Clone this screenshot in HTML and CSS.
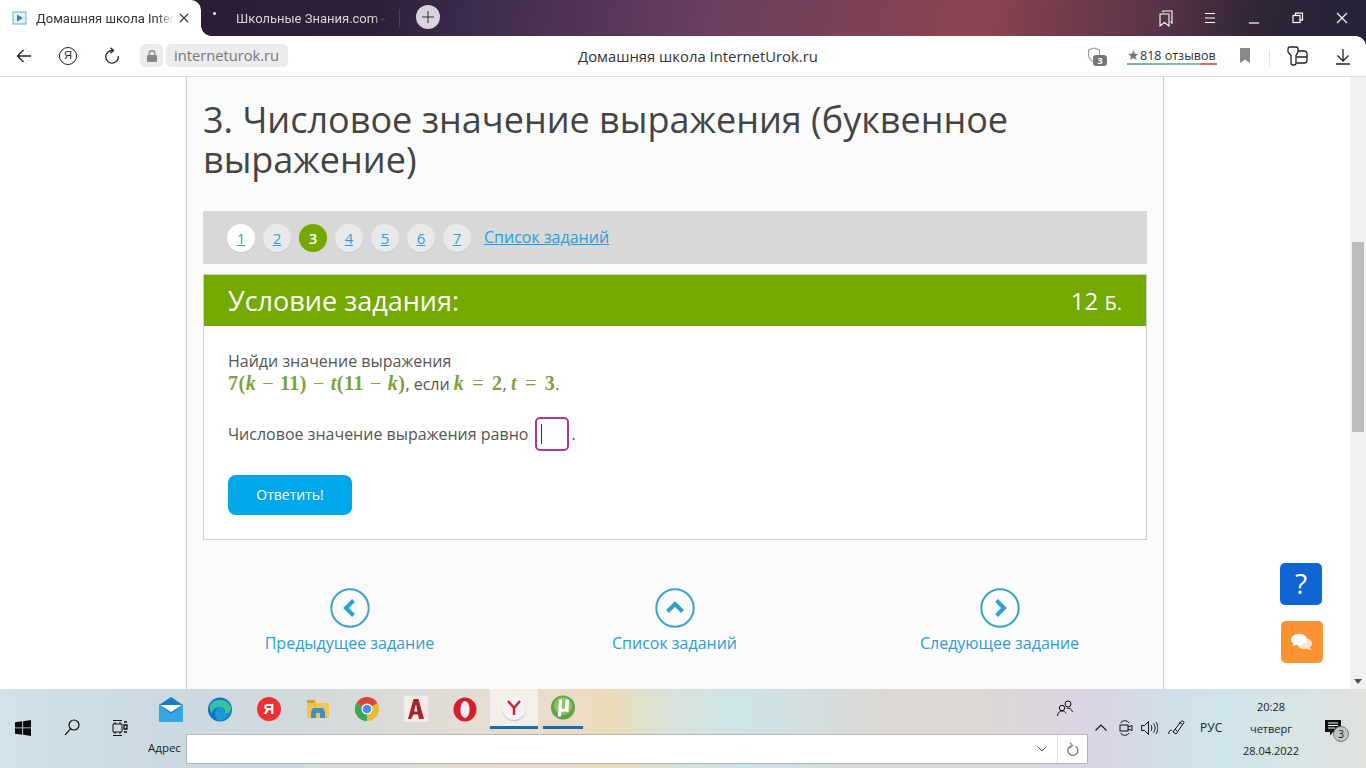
FILE: index.html
```html
<!DOCTYPE html>
<html lang="ru">
<head>
<meta charset="utf-8">
<title>Домашняя школа InternetUrok.ru</title>
<link rel="stylesheet" href="styles.css">
</head>
<body>
<header class="tabbar">
  <div class="tab active">
    <svg class="favicon" width="16" height="16" viewBox="0 0 16 16"><rect x="1" y="2" width="13" height="12" fill="#e4f1f8" stroke="#6fa9c9"/><path d="M5 4.500v7l6-3.500z" fill="#2f86bd"/></svg>
    <span class="tab-title">Домашняя школа InternetUrok.ru</span>
    <svg class="tab-x" width="10" height="10" viewBox="0 0 10 10"><path d="M1 1l8 8M9 1l-8 8" stroke="#333" stroke-width="1.100"/></svg>
  </div>
  <div class="tab inactive">
    <span class="dot"></span>
    <span class="tab-title light">Школьные Знания.com - Poisk</span>
  </div>
  <span class="tab-sep"></span>
  <span class="newtab"><svg width="12" height="12" viewBox="0 0 12 12"><path d="M6 0v12M0 6h12" stroke="#332b40" stroke-width="1"/></svg></span>
  <div class="win-ctrls">
    <svg class="w1" width="18" height="18" viewBox="0 0 18 18" fill="none" stroke="#fff" stroke-width="1.100"><path d="M6 3.500V2h9v12l-1.500-1.200"/><path d="M3 5h9v12l-4.500-3.500L3 17z"/></svg>
    <svg class="w2" width="12" height="12" viewBox="0 0 12 12" stroke="#fff" stroke-width="1"><path d="M1 1.500h10M1 6h10M1 10.500h10"/></svg>
    <svg class="w3" width="12" height="12" viewBox="0 0 12 12" stroke="#fff" stroke-width="1.200"><path d="M1 11h10"/></svg>
    <svg class="w4" width="12" height="12" viewBox="0 0 12 12" fill="none" stroke="#fff" stroke-width="1.200"><rect x="1" y="3.500" width="7" height="7"/><path d="M3.500 3.500V1.200h7v7H8"/></svg>
    <svg class="w5" width="12" height="12" viewBox="0 0 12 12" stroke="#fff" stroke-width="1.100"><path d="M1 1l10 10M11 1L1 11"/></svg>
  </div>
</header>
<nav class="toolbar">
  <svg class="tb-back" width="16" height="14" viewBox="0 0 16 14" fill="none" stroke="#222" stroke-width="1.300"><path d="M15 7H1.500M7.500 1l-6 6 6 6"/></svg>
  <span class="ya-circle">Я</span>
  <svg class="tb-reload" width="16" height="18" viewBox="0 0 16 18" fill="none" stroke="#222" stroke-width="1.300"><path d="M8.500 3.500A6.300 6.300 0 1 0 14.300 9"/><path d="M6.500 .8l3 2.800-3 2.600"/></svg>
  <span class="lock"><svg width="10" height="12" viewBox="0 0 10 12"><path d="M2.200 5V3.500a2.800 2.800 0 0 1 5.600 0V5" fill="none" stroke="#888" stroke-width="1.400"/><rect y="5" width="10" height="7" rx="1" fill="#888"/></svg></span>
  <span class="domain">interneturok.ru</span>
  <span class="page-title">Домашняя школа InternetUrok.ru</span>
  <span class="shield"><svg width="14" height="16" viewBox="0 0 14 16" fill="none" stroke="#999" stroke-width="1.100"><path d="M7 1l5.500 2v5c0 3-2.500 5.500-5.500 7C4 13.500 1.500 11 1.500 8V3z"/></svg><b class="shield-n">3</b></span>
  <span class="reviews"><span class="star">★</span>818 отзывов</span>
  <svg class="tb-bookmark" width="12" height="15" viewBox="0 0 12 15"><path d="M1 0h10v15l-5-3.500L1 15z" fill="#888"/></svg>
  <span class="tb-sep"></span>
  <svg class="tb-ext" width="22" height="20" viewBox="0 0 22 20" fill="none" stroke="#222" stroke-width="1.300"><path d="M3 1h6a2 2 0 0 1 2 2v3L9 9.500V17a2 2 0 0 1-2 2H6a2 2 0 0 1-2-2V9.500L1 6V3a2 2 0 0 1 2-2z"/><path d="M11 5h6a3 3 0 0 1 3 3v6a3 3 0 0 1-3 3H9.500M9.500 11H20"/></svg>
  <svg class="tb-dl" width="14" height="16" viewBox="0 0 14 16" fill="none" stroke="#222" stroke-width="1.300"><path d="M7 0v11.500M1.500 6.500L7 12l5.500-5.500M0 15h14"/></svg>
</nav>
<main class="viewport">
  <article class="sheet">
    <h1 class="heading">3. Числовое значение выражения (буквенное выражение)</h1>
    <div class="pager">
      <a class="pg pg-white">1</a>
      <a class="pg">2</a>
      <a class="pg pg-on">3</a>
      <a class="pg">4</a>
      <a class="pg">5</a>
      <a class="pg">6</a>
      <a class="pg">7</a>
      <a class="pg-list">Список заданий</a>
    </div>
    <section class="task">
      <div class="task-head"><span class="task-title">Условие задания:</span><span class="score">12 <small>Б.</small></span></div>
      <div class="task-body">
        <p class="q">Найди значение выражения<br><span class="math">7(<i>k</i><span class="op">−</span>11)<span class="op">−</span><i>t</i>(11<span class="op">−</span><i>k</i>)</span>, если <span class="math"><i>k</i><span class="eq">=</span>2</span>, <span class="math"><i>t</i><span class="eq">=</span>3</span>.</p>
        <p class="answer"><span>Числовое значение выражения равно</span><span class="input"><span class="caret"></span></span><span>.</span></p>
        <span class="submit">Ответить!</span>
      </div>
    </section>
    <div class="nav-row">
      <a class="nav-item"><svg width="40" height="40" viewBox="0 0 40 40" fill="none"><circle cx="20" cy="20" r="18.700" stroke="#3ba3c8" stroke-width="2"/><path d="M23.500 12.500L16 20l7.500 7.500" stroke="#2ba0d8" stroke-width="4"/></svg><span>Предыдущее задание</span></a>
      <a class="nav-item"><svg width="40" height="40" viewBox="0 0 40 40" fill="none"><circle cx="20" cy="20" r="18.700" stroke="#3ba3c8" stroke-width="2"/><path d="M12.500 23.500L20 16l7.500 7.500" stroke="#2ba0c8" stroke-width="4"/></svg><span>Список заданий</span></a>
      <a class="nav-item"><svg width="40" height="40" viewBox="0 0 40 40" fill="none"><circle cx="20" cy="20" r="18.700" stroke="#3ba3c8" stroke-width="2"/><path d="M16.500 12.500L24 20l-7.500 7.500" stroke="#2ba0d8" stroke-width="4"/></svg><span>Следующее задание</span></a>
    </div>
  </article>
  <span class="fab fab-q">?</span>
  <span class="fab fab-chat"><svg width="24" height="20" viewBox="0 0 24 20"><ellipse cx="14.500" cy="11.500" rx="7.500" ry="5.500" fill="#fbe6d2"/><path d="M19 15l3 3-6-1z" fill="#fbe6d2"/><ellipse cx="9" cy="7.500" rx="8" ry="5.800" fill="#fff"/><path d="M4 11l-2 3 6-1.500z" fill="#fff"/></svg></span>
  <div class="scrollbar">
    <span class="sb-thumb"></span>
    <span class="sb-down"></span>
  </div>
</main>
<footer class="taskbar">
  <svg class="t-win" width="16" height="16" viewBox="0 0 15 15" fill="#0c0c0c"><path d="M0 2.200L6.800 1.200V7H0zM7.600 1.100L15 0v7H7.600zM0 7.800h6.800v6L0 12.800zM7.600 7.800H15V15l-7.400-1.100z"/></svg>
  <svg class="t-search" width="16" height="17" viewBox="0 0 16 17" fill="none" stroke="#111" stroke-width="1.200"><circle cx="10" cy="6" r="5"/><path d="M6.500 9.800L1 16"/></svg>
  <svg class="t-task" width="16" height="16" viewBox="0 0 16 16" fill="none" stroke="#111" stroke-width="1"><path d="M1 .5h9M1 15.500h9M1 4h9v8H1zM3 2v2M8 2v2M3 12v2M8 12v2"/><path d="M12 2h3M12 5h3v4h-3zM12 12h3" stroke-width="1.300"/></svg>
  <svg class="app a-mail" width="24" height="25" viewBox="0 0 24 25"><path d="M0 8L12 0l12 8v17H0z" fill="#1b7fc4"/><path d="M1 8h22L12 15z" fill="#fff"/><path d="M0 8l12 9 12-9v17H0z" fill="#36a7e3"/></svg>
  <svg class="app a-edge" width="24" height="25" viewBox="0 0 24 24"><circle cx="12" cy="12" r="12" fill="#1173c4"/><path d="M2 8C5 1 19-1 23 10c1 4-3 7-7 6 3-4-2-8-7-6-3 1-5 3-5 7-1-3-3-6-2-9z" fill="#36c4a0"/><path d="M12 9c3 0 5 3 4 7 3 1 6 0 7-3-1 7-9 12-14 9-3-3-2-9 0-11 1-1 2-2 3-2z" fill="#1e94da"/></svg>
  <span class="app a-ya">Я</span>
  <svg class="app a-folder" width="22" height="20" viewBox="0 0 22 20"><path d="M0 1h8l2 3h12v15H0z" fill="#f1c64f"/><path d="M0 1h8v3H0z" fill="#d8a22a"/><path d="M6 9h10l2 4v6H4v-6z" fill="#3c8ec4"/><path d="M9 14h4v5H9z" fill="#f1c64f"/></svg>
  <svg class="app a-chrome" width="24" height="24" viewBox="0 0 24 24"><circle cx="12" cy="12" r="12" fill="#e8bb2e"/><path d="M12 12L1.600 6A12 12 0 0 1 22.400 6z" fill="#d9473a"/><path d="M12 12L1.600 6A12 12 0 0 0 12 24z" fill="#3ba757"/><circle cx="12" cy="12" r="5.500" fill="#fff"/><circle cx="12" cy="12" r="4.300" fill="#4c8be8"/></svg>
  <span class="app a-acad"><svg width="24" height="26" viewBox="0 0 24 26"><rect width="24" height="26" fill="#f3ece8"/><path d="M9.500 3h5L20 23h-5l-1-4.500H9.500L7 23H4z" fill="#a8242a"/><path d="M12 8l-2 7.500h3.500z" fill="#f3ece8"/></svg></span>
  <svg class="app a-opera" width="24" height="25" viewBox="0 0 24 24"><ellipse cx="12" cy="12" rx="11.500" ry="12" fill="#d61f2c"/><ellipse cx="12" cy="12" rx="4.600" ry="8.500" fill="#fbeeee"/></svg>
  <span class="run run-active"><span class="y-ball"><svg width="14" height="15" viewBox="0 0 14 15" fill="none" stroke="#cf1f2e" stroke-width="2.400"><path d="M1 1l6 7 6-7M7 7.500V15"/></svg></span></span>
  <span class="run run-ut"><svg width="24" height="25" viewBox="0 0 24 24"><circle cx="12" cy="12" r="12" fill="#5fa24a"/><circle cx="12" cy="10.500" r="9" fill="#8cc55f"/><path d="M8 4h3l-.2 8c0 2 2.700 2.200 3.200 0l.5-8H18l-.6 12.500h-3l.1-1.500c-1 1.500-2.700 1.800-4 .8L10 21H6.800z" fill="#fff"/></svg></span>
  <span class="addr-label">Адрес</span>
  <div class="addr">
    <span class="addr-field"></span>
    <span class="addr-chev"><svg width="10" height="6" viewBox="0 0 10 6" fill="none" stroke="#555"><path d="M.5.500L5 5 9.500.500"/></svg></span>
    <span class="addr-btn"><svg width="12" height="15" viewBox="0 0 12 15" fill="none" stroke="#777" stroke-width="1.300"><path d="M8.500 4.200A5 5 0 1 1 4 3.800"/><path d="M3 .5l2.500 3.200L2.500 6" stroke-width="1.100"/></svg></span>
  </div>
  <svg class="t-people" width="16" height="17" viewBox="0 0 16 17" fill="none" stroke="#111" stroke-width="1"><circle cx="11" cy="4" r="3"/><circle cx="5" cy="8" r="2.700"/><path d="M.5 16c0-3 2-5 4.500-5s3.500 1 4 2.500M9.500 8c3 0 5.500 1 6 4"/></svg>
  <svg class="t-chev" width="12" height="7" viewBox="0 0 12 7" fill="none" stroke="#111" stroke-width="1.100"><path d="M.5 6.500L6 1l5.500 5.500"/></svg>
  <svg class="t-cam" width="14" height="16" viewBox="0 0 14 16" fill="none" stroke="#111"><path d="M2 3c0-3 7-3 8 0M2 13c0 3 7 3 8 0"/><rect x="1" y="5" width="8" height="6"/><path d="M9 7l4-1.500v5L9 9"/></svg>
  <svg class="t-vol" width="17" height="14" viewBox="0 0 17 14" fill="none" stroke="#111"><path d="M.5 4.500h3L7.500.5v13l-4-4h-3z"/><path d="M10 4c1 1.500 1 4.500 0 6M12.500 2.500c2 2.500 2 6.500 0 9M15 1c2.500 3.500 2.500 8.500 0 12"/></svg>
  <svg class="t-pen" width="18" height="18" viewBox="0 0 18 18" fill="none" stroke="#111" stroke-width="1"><path d="M5 13L13 2.500c1-1 3-.5 3 1L8 15zM14 5l-2.500-1.500M7 10l2 2M1 15c-1-3 2-5 3-3"/></svg>
  <span class="t-lang">РУС</span>
  <div class="t-clock"><span>20:28</span><span>четверг</span><span>28.04.2022</span></div>
  <span class="t-notif"><svg width="16" height="16" viewBox="0 0 16 16"><path d="M0 0h16v12H8l-3 3.500V12H0z" fill="#111"/><path d="M3 3h10M3 5.500h10M3 8h7" stroke="#fff"/></svg><b class="notif-n">3</b></span>
</footer>
</body>
</html>
```
FILE: styles.css
```css
* { box-sizing: border-box; }
html, body { margin: 0; height: 100%; }
body { width: 1366px; height: 768px; overflow: hidden; display: flex; flex-direction: column; font-family: "Open Sans", sans-serif; background: #fff; }

.tabbar { height: 36px; flex: none; display: flex; align-items: stretch; position: relative; background: linear-gradient(100deg, #291a35 0%, #2e2038 28%, #3b2b4c 34%, #6b3f60 52%, #854352 68%, #8a4450 72%, #5c3448 84%, #2f2538 92%, #262238 100%); }
.tab { display: flex; align-items: center; font-size: 13px; font-family: Roboto, sans-serif; }
.tab.active { width: 201px; background: #fff; border-radius: 0 10px 0 0; padding-left: 12px; color: #333; position: relative; }
.tab.active::after { content: ""; position: absolute; right: -10px; bottom: 0; width: 10px; height: 10px; background: radial-gradient(circle at 100% 0, transparent 9.500px, #fff 10px); }
.favicon { flex: none; margin-right: 8px; }
.tab-title { white-space: nowrap; overflow: hidden; }
.tab.active .tab-title { width: 138px; -webkit-mask-image: linear-gradient(90deg, #000 88%, transparent 100%); mask-image: linear-gradient(90deg, #000 88%, transparent 100%); }
.tab-x { margin-left: 5px; flex: none; }
.tab.inactive { width: 199px; padding-left: 12px; color: #e8e3ea; position: relative; }
.tab-title.light { margin-left: 23px; width: 152px; color: #d9d4dc; -webkit-mask-image: linear-gradient(90deg, #000 90%, transparent 100%); mask-image: linear-gradient(90deg, #000 90%, transparent 100%); }
.dot { position: absolute; left: 12px; top: 12px; width: 3px; height: 3px; background: #fff; border-radius: 50%; }
.tab-sep { width: 1px; height: 18px; margin: 9px 0 0 -1px; background: #4d4356; }
.newtab { width: 24px; height: 24px; border-radius: 50%; background: #d8d3dc; margin: 5px 0 0 16px; display: flex; align-items: center; justify-content: center; }
.win-ctrls { margin-left: auto; display: flex; align-items: center; }
.win-ctrls svg { flex: none; }
.w1 { margin-right: 29px; }
.w2 { margin-right: 32px; }
.w3 { margin-right: 32px; }
.w4 { margin-right: 32px; }
.w5 { margin-right: 18px; }

.toolbar { height: 41px; flex: none; display: flex; align-items: center; background: #fff; border-bottom: 1px solid #ddd; position: relative; font-size: 14px; padding-bottom: 1px; }
.toolbar::after { content: ""; position: absolute; right: 0; top: 0; width: 10px; height: 10px; background: radial-gradient(circle at 0 100%, transparent 9.500px, #262238 10px); }
.tb-back { margin-left: 16px; }
.ya-circle { width: 18px; height: 18px; border: 1.300px solid #222; border-radius: 50%; margin-left: 27px; font-size: 11px; line-height: 15px; text-align: center; color: #222; font-family: "Liberation Sans", sans-serif; }
.tb-reload { margin-left: 27px; }
.lock { width: 23px; height: 23px; margin-left: 20px; background: #ececec; border-radius: 5px; display: flex; align-items: center; justify-content: center; }
.domain { margin-left: 3px; height: 23px; width: 122px; padding-left: 8px; background: #ececec; border-radius: 5px; color: #777; font-size: 14.700px; line-height: 22px; }
.page-title { position: absolute; left: 578px; top: 10px; font-size: 14.850px; line-height: 20px; color: #333; white-space: nowrap; }
.shield { position: absolute; left: 1087px; top: 11px; width: 20px; height: 20px; }
.shield-n { position: absolute; left: 6px; top: 8px; width: 14px; height: 11px; border-radius: 3px; background: #777; color: #fff; font-size: 9px; line-height: 11px; text-align: center; }
.reviews { position: absolute; left: 1127px; top: 9px; height: 20px; width: 90px; font-size: 12.500px; line-height: 19px; color: #333; white-space: nowrap; border-bottom: 2px solid; border-image: linear-gradient(90deg, #70b890 0%, #8fc3a0 78%, #d86a60 82%, #d86a60 100%) 1; }
.star { color: #777; font-size: 14px; }
.tb-bookmark { position: absolute; left: 1239px; top: 12px; }
.tb-sep { position: absolute; left: 1269px; top: 14px; width: 1px; height: 16px; background: #e2e2e2; }
.tb-ext { position: absolute; left: 1287px; top: 10px; }
.tb-dl { position: absolute; left: 1336px; top: 13px; }

.viewport { flex: 1; min-height: 0; position: relative; overflow: hidden; background: #fff; }
.sheet { width: 978px; height: 100%; margin-left: 186px; padding: 23px 16px 0; background: #fbfbfb; border: solid #c9c9c9; border-width: 0 1px; }
.heading { margin: 0; font-size: 36px; line-height: 40px; font-weight: 400; color: #444; }
.pager { height: 53px; margin-top: 31px; background: #d8d8d8; display: flex; align-items: center; padding-left: 24px; gap: 8px; }
.pg { width: 28px; height: 28px; border-radius: 50%; background: #e9e9e9; box-shadow: 0 1px 1px #ccc; color: #2a9fd6; font-size: 15px; font-weight: 400; line-height: 28px; text-align: center; text-decoration: underline; }
.pg-white { background: #fff; }
.pg-on { background: #74a800; color: #fff; text-decoration: none; box-shadow: none; font-weight: 600; }
.pg-list { margin-left: 5px; padding-bottom: 2px; color: #1f9fd6; font-size: 16px; text-decoration: underline; }

.task { margin-top: 10px; height: 266px; background: #fff; border: 1px solid #cfcfcf; }
.task-head { height: 51px; background: #74a900; color: #fff; display: flex; justify-content: space-between; align-items: center; padding: 0 24px; font-size: 24px; }
.task-title { font-size: 27px; font-weight: 400; }
.score small { font-size: 20px; }
.task-body { padding: 24px 24px 0; color: #555; font-size: 16px; line-height: 22px; }
.q { margin: 0; }
.math { font-family: "Liberation Serif", serif; color: #7ba33a; font-size: 20px; font-weight: 700; letter-spacing: .5px; }
.math .op { font-weight: 400; margin: 0 6px; }
.math .eq { font-weight: 400; margin: 0 8px; }
.answer { margin: 22px 0 0; height: 34px; display: flex; align-items: center; white-space: pre; }
.input { width: 34px; height: 34px; margin: 0 2px 0 7px; border: 2px solid #b5358a; border-radius: 5px; background: #fff; display: flex; align-items: center; padding-left: 4px; }
.caret { width: 1px; height: 20px; background: #333; }
.submit { display: block; margin-top: 24px; width: 124px; height: 40px; border-radius: 8px; background: #00a8ea; color: #fff; font-size: 14px; line-height: 40px; text-align: center; }

.nav-row { display: grid; grid-template-columns: repeat(3, 325px); margin: 48px -16px 0; }
.nav-item { display: flex; flex-direction: column; align-items: center; color: #2a9fd6; font-size: 16px; line-height: 22px; gap: 4px; }

.fab { position: absolute; width: 42px; height: 42px; border-radius: 5px; display: flex; align-items: center; justify-content: center; color: #fff; }
.fab-q { left: 1280px; top: 486px; background: #0f66d3; font-size: 28px; padding-bottom: 2px; }
.fab-chat { left: 1281px; top: 544px; background: #fa9332; }

.scrollbar { position: absolute; right: 0; top: 0; bottom: 0; width: 16px; background: #f1f1f1; }
.sb-thumb { position: absolute; left: 2px; right: 2px; top: 165px; height: 190px; background: #bdbdbd; }
.sb-down { position: absolute; left: 4px; bottom: 5px; border: solid transparent; border-width: 5px 4px 0; border-top-color: #505050; }

.taskbar { height: 79px; flex: none; position: relative; font-size: 12px; color: #222; background: linear-gradient(90deg, #cfe3e8 0%, #cbd9e2 12%, #d2d9dd 22%, #e3ddd4 34%, #ebdcc8 42%, #ecdcb8 44.500%, #d8e2da 49%, #cde4e8 54%, #d2e0e2 58%, #dcd8d4 65%, #dcd8d4 72%, #dcd4e4 79%, #d8d6e6 81%, #d0e0ea 86%, #cfe4ea 90%, #d8e4e4 96%, #e0e0dc 100%); }
.taskbar > svg, .taskbar > span, .taskbar > div { position: absolute; }
.t-win { left: 15px; top: 31px; }
.t-search { left: 64px; top: 30px; }
.t-task { left: 112px; top: 31px; }
.a-mail { left: 159px; top: 8px; }
.a-edge { left: 208px; top: 8px; }
.a-ya { left: 257px; top: 8px; width: 24px; height: 24px; border-radius: 50%; background: #ef3030; color: #fff; font: 700 15px/24px "Liberation Sans", sans-serif; text-align: center; }
.a-folder { left: 307px; top: 10px; }
.a-chrome { left: 355px; top: 8px; }
.a-acad { left: 404px; top: 7px; width: 24px; height: 26px; }
.a-opera { left: 453px; top: 8px; }
.run { top: 0; display: flex; align-items: center; justify-content: center; height: 40px; border-bottom: 3px solid #1a6ea8; }
.run-active { left: 490px; width: 48px; background: rgba(255,255,255,.55); }
.run-ut { left: 543px; width: 40px; }
.y-ball { width: 24px; height: 24px; border-radius: 50%; background: #f4f2f2; box-shadow: 0 1px 1px #bbb; display: flex; align-items: center; justify-content: center; }
.addr-label { left: 148px; top: 50px; line-height: 18px; font-size: 11.500px; }
.addr { left: 186px; top: 45px; width: 902px; height: 30px; background: #fff; border: 1px solid #aeb4b8; border-top-color: #b8b8b8; display: flex; }
.addr-field { flex: 1; }
.addr-chev { width: 30px; display: flex; align-items: center; justify-content: center; }
.addr-btn { width: 30px; display: flex; align-items: center; justify-content: center; border-left: 1px solid #ddd; }
.t-people { left: 1057px; top: 11px; }
.t-chev { left: 1095px; top: 35px; }
.t-cam { left: 1119px; top: 31px; }
.t-vol { left: 1141px; top: 32px; }
.t-pen { left: 1168px; top: 30px; }
.t-lang { left: 1200px; top: 30px; line-height: 18px; font-size: 12px; }
.t-clock { left: 1232px; top: 7px; width: 78px; display: flex; flex-direction: column; align-items: center; font-size: 11px; line-height: 22px; }
.t-notif { left: 1325px; top: 31px; width: 24px; height: 24px; }
.notif-n { position: absolute; left: 8px; top: 6px; width: 16px; height: 16px; border-radius: 50%; background: #bfc6c6; border: 1px solid #777; font-size: 10px; font-weight: 400; line-height: 14px; text-align: center; color: #111; }
```
